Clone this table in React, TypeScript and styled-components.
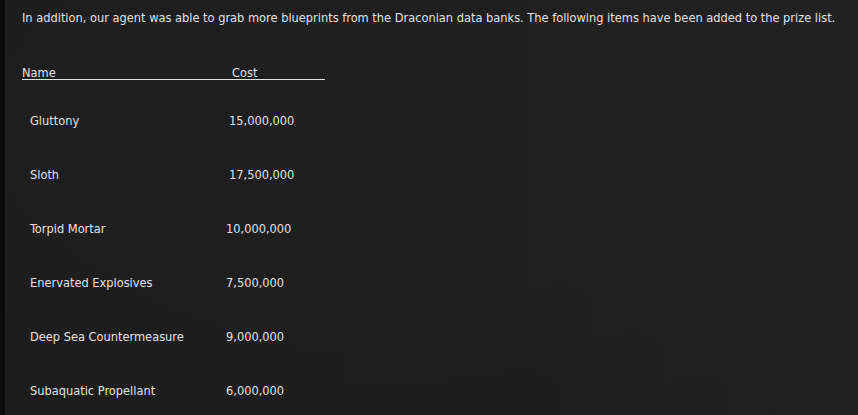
import React from 'react';
import styled, { createGlobalStyle } from 'styled-components';

interface Prize {
  name: string;
  cost: string;
  indent?: number;
}

const prizes: Prize[] = [
  { name: 'Gluttony', cost: '15,000,000', indent: 3 },
  { name: 'Sloth', cost: '17,500,000', indent: 3 },
  { name: 'Torpid Mortar', cost: '10,000,000' },
  { name: 'Enervated Explosives', cost: '7,500,000' },
  { name: 'Deep Sea Countermeasure', cost: '9,000,000' },
  { name: 'Subaquatic Propellant', cost: '6,000,000' },
];

const App: React.FC = () => {
  return (
    <Page>
      <GlobalStyle />
      <Strip />
      <Content>
        <Intro>
          In addition, our agent was able to grab more blueprints from the
          Draconian data banks. The following items have been added to the
          prize list.
        </Intro>
        <Table>
          <HeaderRow>
            <span>Name</span>
            <span>Cost</span>
          </HeaderRow>
          {prizes.map((prize) => (
            <Row key={prize.name}>
              <span>{prize.name}</span>
              <CostCell indent={prize.indent ?? 0}>{prize.cost}</CostCell>
            </Row>
          ))}
        </Table>
      </Content>
    </Page>
  );
};

const GlobalStyle = createGlobalStyle`
  html, body {
    margin: 0;
    padding: 0;
    background: #1d1d1d;
  }
`;

const Page = styled.div`
  display: flex;
  width: 858px;
  height: 415px;
  overflow: hidden;
  background:
    radial-gradient(ellipse at 40% 30%, rgba(0, 0, 0, 0) 40%, rgba(0, 0, 0, 0.12) 100%),
    linear-gradient(to right, #1e1e1e 0%, #1f1f1f 60%, #242424 100%);
  font-family: 'DejaVu Sans Condensed', 'DejaVu Sans', Tahoma, sans-serif;
  font-size: 12.7px;
  color: #e2e2e2;
`;

const Strip = styled.div`
  width: 5px;
  flex-shrink: 0;
  background: #0b0b0b;
`;

const Content = styled.div`
  flex: 1;
  padding: 10px 0 0 17px;
`;

const Intro = styled.p`
  margin: 0;
  line-height: 15px;
  white-space: nowrap;
`;

const Table = styled.div`
  margin-top: 41px;
  width: 303px;
`;

const HeaderRow = styled.div`
  display: grid;
  grid-template-columns: 210px 1fr;
  line-height: 13px;
  border-bottom: 1px solid #e2e2e2;
  margin-bottom: 14px;
`;

const Row = styled.div`
  display: grid;
  grid-template-columns: 196px 1fr;
  align-items: center;
  height: 54px;
  padding-left: 8px;
  line-height: 14px;
`;

const CostCell = styled.span<{ indent: number }>`
  padding-left: ${(p) => p.indent}px;
`;

export default App;
